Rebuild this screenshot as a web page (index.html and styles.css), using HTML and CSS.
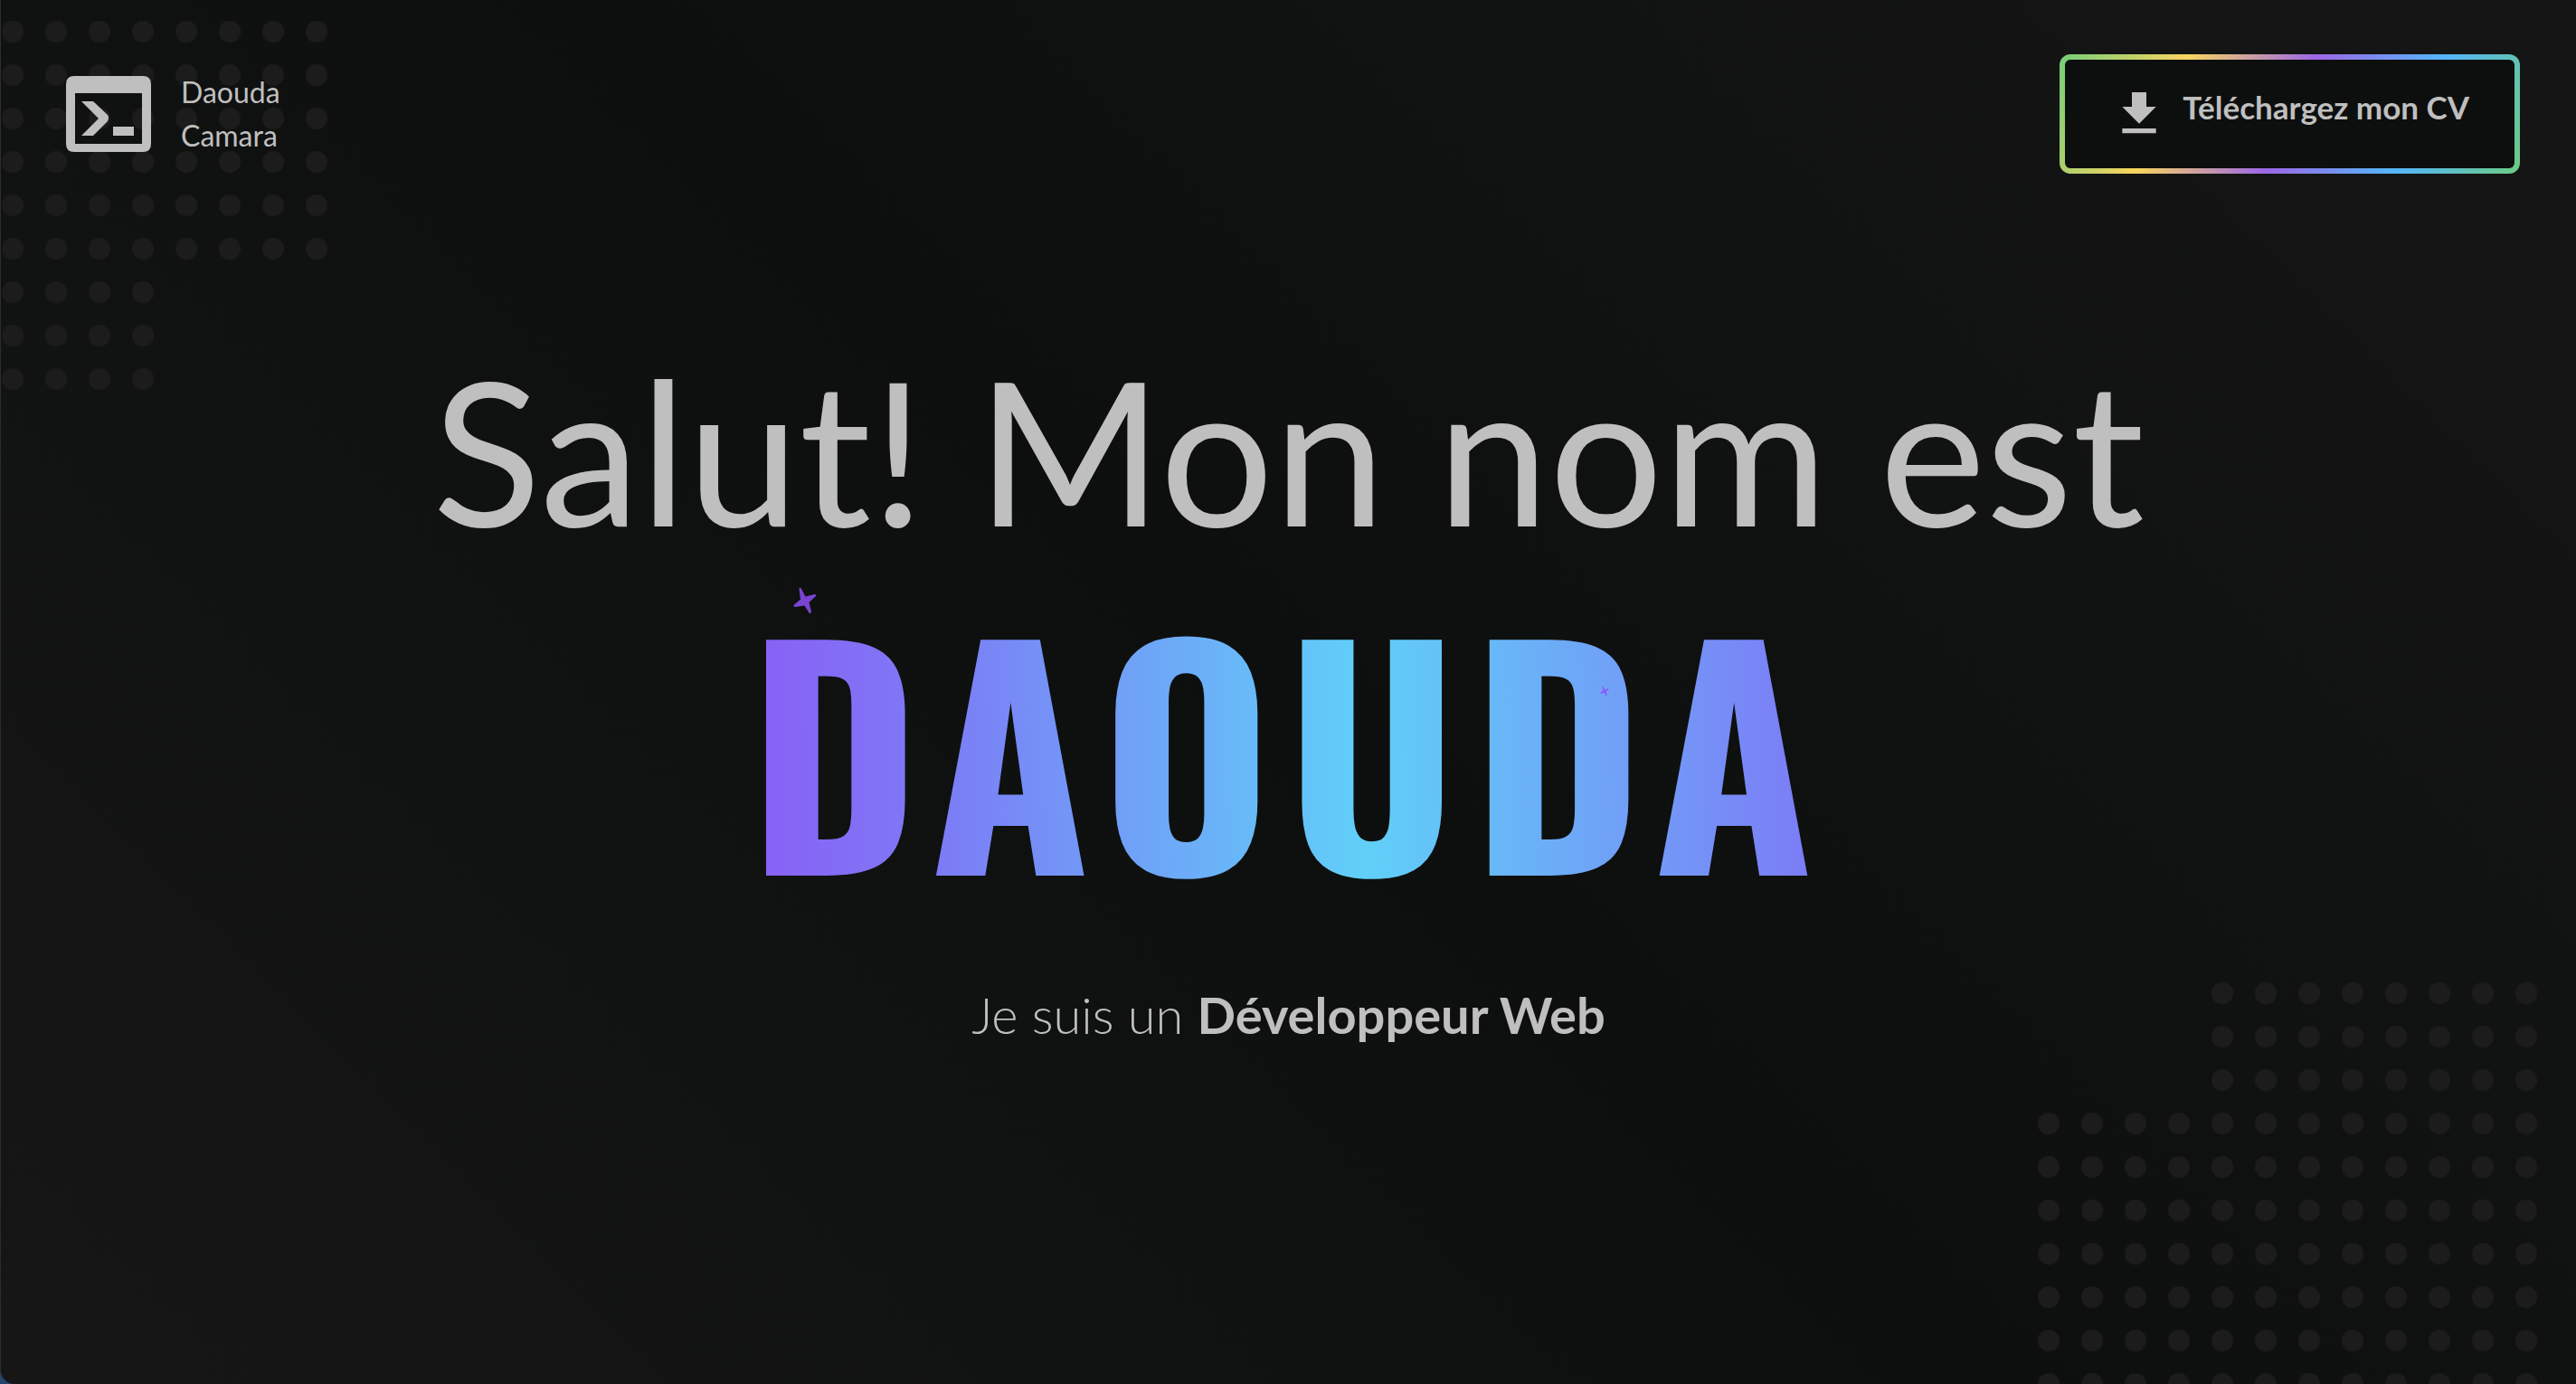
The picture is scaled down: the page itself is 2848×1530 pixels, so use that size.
FILE: index.html
```html
<!DOCTYPE html>
<html lang="fr">
<head>
  <meta charset="utf-8">
  <meta name="viewport" content="width=device-width, initial-scale=1">
  <title>Daouda Camara</title>
  <link rel="stylesheet" href="styles.css">
</head>
<body>
  <div class="page">
    <div class="dots dots-top" aria-hidden="true"></div>
    <div class="dots dots-bottom" aria-hidden="true"></div>

    <header class="header">
      <a class="brand" href="#">
        <svg class="brand-icon" viewBox="0 0 94 84" aria-hidden="true">
          <path fill-rule="evenodd" d="M9 0H85Q94 0 94 9V75Q94 84 85 84H9Q0 84 0 75V9Q0 0 9 0ZM10 19V75H84V19Z"/>
          <path d="M17 28H30L46 43Q48 46 46 50L30 66H17L36 47ZM52 56H75V66H52Z"/>
        </svg>
        <span class="brand-name">Daouda<br>Camara</span>
      </a>
      <a class="cv-button" href="#">
        <svg class="cv-icon" viewBox="0 0 24 24" aria-hidden="true">
          <path d="M5 20h14v-2H5v2zM19 9h-4V3H9v6H5l7 7 7-7z"/>
        </svg>
        <span class="cv-label">Téléchargez mon CV</span>
      </a>
    </header>

    <main class="hero">
      <h1 class="title">
        <span class="greeting">Salut! Mon nom est</span>
        <span class="name">
          <span class="name-text">DAOUDA</span>
          <svg class="star star-large" viewBox="0 0 26 30" aria-hidden="true">
            <path d="M6.500 1.500Q8 0 9 2L13.500 10.500L23.500 8Q26 8 25 10L17.500 17L20 27.500Q19 30 17.500 28.500L12.500 20.500L2 22Q0 22 .5 20L8 13.500Z"/>
          </svg>
          <svg class="star star-small" viewBox="0 0 26 30" aria-hidden="true">
            <path d="M6.500 1.500Q8 0 9 2L13.500 10.500L23.500 8Q26 8 25 10L17.500 17L20 27.500Q19 30 17.500 28.500L12.500 20.500L2 22Q0 22 .5 20L8 13.500Z"/>
          </svg>
        </span>
      </h1>
      <p class="role">Je suis un <strong>Développeur Web</strong></p>
    </main>
  </div>
</body>
</html>
```
FILE: styles.css
```css
* {
  box-sizing: border-box;
}

html {
  background: #24456e;
}

body {
  margin: 0;
  color: #bfbfbf;
  font-family: Lato, sans-serif;
}

.page {
  position: relative;
  display: flex;
  flex-direction: column;
  min-height: 100vh;
  overflow: hidden;
  border-left: 1px solid #2b2d2d;
  border-bottom-left-radius: 16px;
  background: linear-gradient(45deg, #161616, #111312 28%, #0d0f0e 50%, #111312 72%, #151515);
}

/* Dotted corners */
.dots {
  position: absolute;
  background: radial-gradient(circle at 12px 12px, #1c1c1c 11px, transparent 13px) 0 0 / 48px 48px;
}

.dots-top {
  top: 23px;
  left: 1px;
  width: 360px;
  height: 408px;
  clip-path: polygon(0 0, 100% 0, 100% 276px, 180px 276px, 180px 100%, 0 100%);
}

.dots-bottom {
  right: 43px;
  bottom: 0;
  width: 552px;
  height: 444px;
  clip-path: polygon(180px 0, 100% 0, 100% 100%, 0 100%, 0 132px, 180px 132px);
}

/* Header */
.header {
  position: relative;
  display: flex;
  justify-content: space-between;
  align-items: center;
  padding: 60px 62px 0 72px;
}

.brand {
  display: flex;
  align-items: center;
  gap: 33px;
  color: inherit;
  text-decoration: none;
}

.brand-icon {
  width: 94px;
  height: 84px;
  fill: #bfbfbf;
}

.brand-name {
  font-size: 32px;
  line-height: 48px;
}

.cv-button {
  display: flex;
  align-items: flex-start;
  gap: 16px;
  padding: 28px 50px;
  border: 6px solid transparent;
  border-radius: 12px;
  background:
    linear-gradient(#0d0f0e, #0d0f0e) padding-box,
    linear-gradient(114deg, #74cd78, #f8d55f 25%, #9d67e5 50%, #54b5fc 75%, #6ccb83) border-box;
  color: inherit;
  font-size: 35px;
  font-weight: 700;
  line-height: 48px;
  text-decoration: none;
}

.cv-icon {
  width: 64px;
  height: 64px;
  fill: #bfbfbf;
}

/* Hero */
.hero {
  position: relative;
  display: flex;
  flex-direction: column;
  align-items: center;
  padding-top: 174px;
  text-align: center;
}

.title {
  display: flex;
  flex-direction: column;
  align-items: center;
  margin: 0;
  font-weight: 400;
}

.greeting {
  font-size: 222px;
  line-height: 260px;
}

.name {
  position: relative;
  font-family: Oswald, sans-serif;
  font-size: 322px;
  font-weight: 700;
  line-height: 394px;
  letter-spacing: 16px;
}

.name-text {
  display: block;
  background: linear-gradient(89deg, #895ff5, #7c7cf6 18%, #60d0f8 57%, #7c7cf6 98%);
  background-clip: text;
  -webkit-background-clip: text;
  color: transparent;
}

.star {
  position: absolute;
  fill: #7a43d2;
}

.star-large {
  top: 23px;
  left: 49px;
  width: 26px;
  height: 30px;
}

.star-small {
  top: 132px;
  right: 242px;
  width: 10px;
  height: 12px;
  fill: #8b5cf6;
}

.role {
  margin: 60px 0 0;
  font-size: 56px;
  font-weight: 300;
  line-height: 84px;
}

.role strong {
  font-weight: 700;
}
```
